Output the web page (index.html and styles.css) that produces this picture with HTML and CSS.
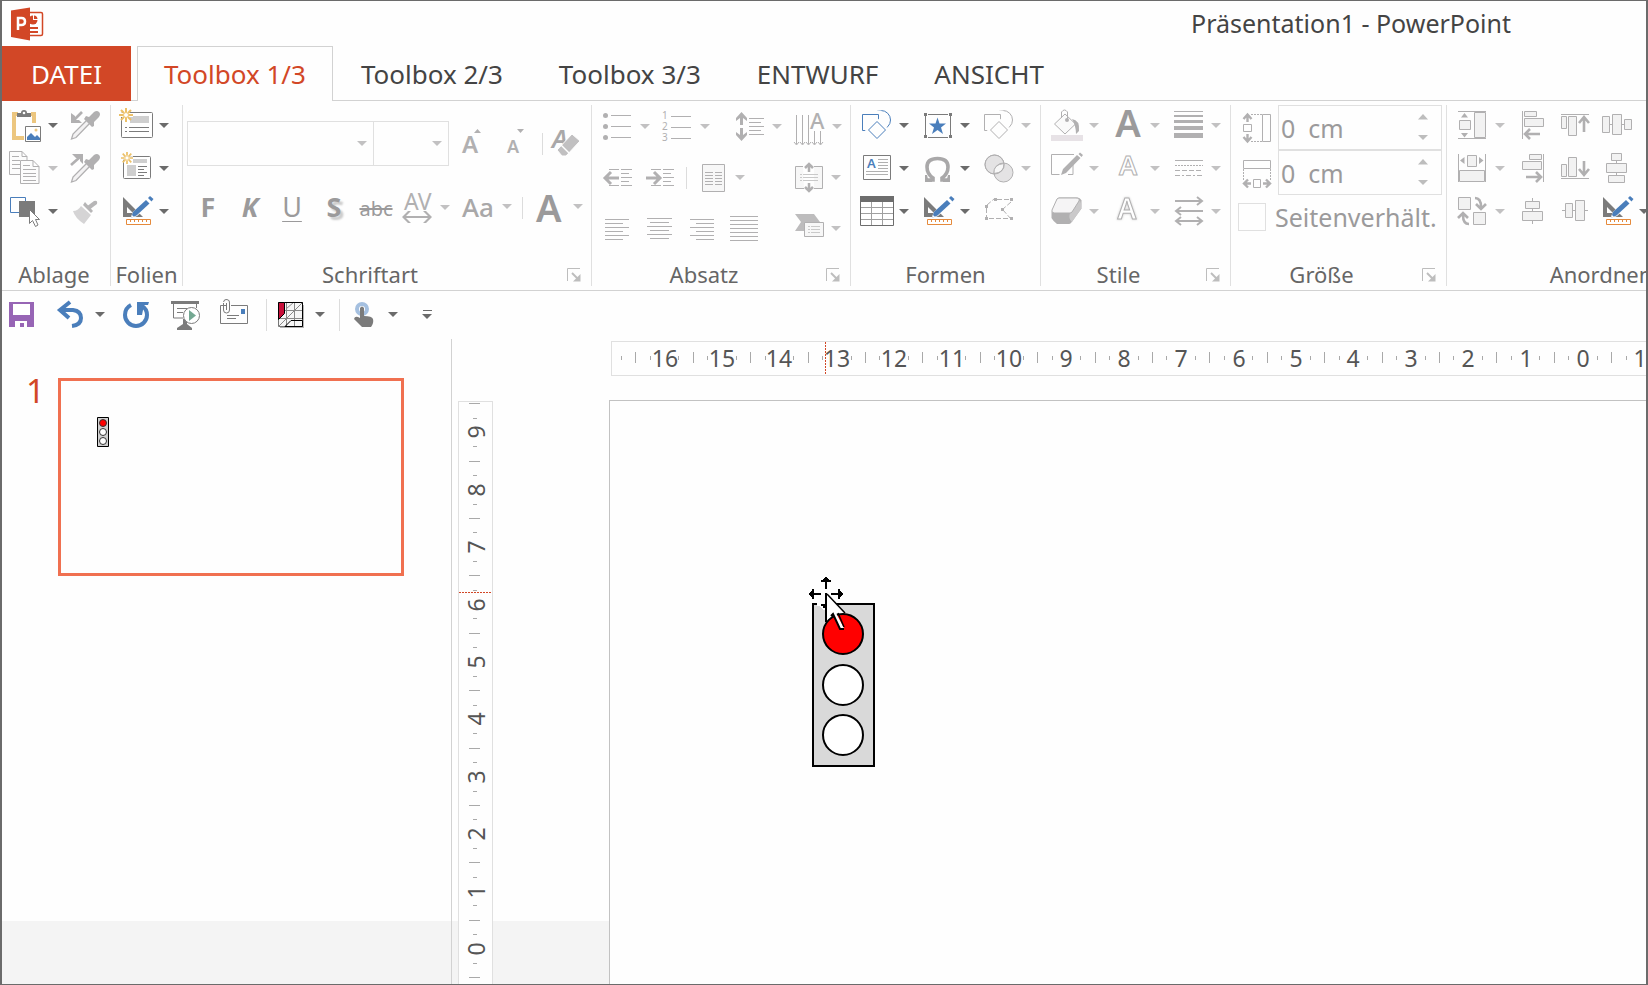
FILE: index.html
```html
<!DOCTYPE html>
<html lang="de">
<head>
<meta charset="utf-8">
<title>Präsentation1 - PowerPoint</title>
<link rel="stylesheet" href="styles.css">
</head>
<body>
<svg class="sprite" aria-hidden="true">
  <symbol id="caret" viewBox="0 0 10 6"><path d="M0 0h10L5 5z" fill="currentColor"/></symbol>
  <symbol id="caret-up" viewBox="0 0 10 6"><path d="M0 5.500h10L5 0z" fill="currentColor"/></symbol>
  <symbol id="launcher" viewBox="0 0 14 14"><path d="M.5 13V.5H13" fill="none" stroke="currentColor"/><path d="M5 5l6 6" stroke="currentColor" stroke-width="2"/><path d="M13.500 6v7.500H6z" fill="currentColor"/></symbol>

  <symbol id="paste" viewBox="0 0 36 36">
    <path d="M10 6H6v24h10M23 6h3v9" fill="none" stroke="#ecc67f" stroke-width="4"/>
    <path d="M9 9V5h4a3 3 0 0 1 6 0h4v4z" fill="#7b7b7b"/><circle cx="16" cy="5" r="1.300" fill="#fff"/>
    <path d="M17.500 18.500h15v15h-15z" fill="#fff" stroke="#7b7b7b"/><path d="M19 32v-3l4-4 4 4 2-2 3 3v2z" fill="#4a7ebb"/><circle cx="28" cy="22" r="1.500" fill="#ecc67f"/>
  </symbol>
  <symbol id="dropper" viewBox="0 0 36 36">
    <path d="M20 12L6 26l-1.500 5L9 29.500 23 15" fill="#f3f2f3" stroke="currentColor" stroke-width="1.300"/>
    <path d="M19 8l3 1 5-5q3-2 5 0t0 5l-5 5v4l-2 1-8-8z" fill="currentColor"/>
  </symbol>
  <symbol id="pick" viewBox="0 0 36 36"><use href="#dropper"/><path d="M15 4L7 12" stroke="currentColor" stroke-width="2.600"/><path d="M4 5v10h11l-3-3H8V8z" fill="currentColor"/></symbol>
  <symbol id="apply" viewBox="0 0 36 36"><use href="#dropper"/><path d="M4 14L13 6" stroke="currentColor" stroke-width="2.600"/><path d="M5 3h11v10l-3-3V7H9z" fill="currentColor"/></symbol>
  <symbol id="copy" viewBox="0 0 36 36" fill="#fcfcfc" stroke="currentColor">
    <path d="M1.500.5H14l5 5v18H1.500zM14 .5v5h5M4 5.500h7M4 9.500h8M4 13.500h8M4 17.500h8"/>
    <path d="M12.500 9.500H25l6 6v17H12.500zM25 9.500v6h6M15 14.500h7M15 18.500h13M15 22.500h13M15 25.500h13M15 29.500h13"/>
  </symbol>
  <symbol id="select" viewBox="0 0 36 36">
    <path d="M2.500 3.500h15v15h-15z" fill="#fff" stroke="#4a7ebb"/><path d="M11 7h16v16H11z" fill="#7b7b7b"/>
    <path d="M21.500 15.500v14l3-3 3 6 2.500-1.500-2.500-5.500h4z" fill="#fff" stroke="#7b7b7b"/>
  </symbol>
  <symbol id="brush" viewBox="0 0 36 36"><path d="M27 7q4-1 3 3l-8 6-3-3z" fill="#b7b6b7"/><path d="M18 8l8 9-2 2-8-8z" fill="#b7b6b7"/><path d="M14 12l10 9-7 9Q8 24 6 17q5 0 8-5z" fill="#d5d4d5"/></symbol>
  <symbol id="spark" viewBox="0 0 14 14"><g stroke="#fff" stroke-width="4"><path d="M7 0v14M0 7h14"/></g><g stroke="#ecc067" stroke-width="2"><path d="M7 0v4M7 10v4M0 7h4M10 7h4M2 2l3 3M9 9l3 3M12 2L9 5M5 9l-3 3"/></g><circle cx="7" cy="7" r="2.500" fill="#fff" stroke="#ecc067"/></symbol>
  <symbol id="newslide" viewBox="0 0 36 36"><rect x="2.500" y="4.500" width="31" height="25" rx="1" fill="#fff" stroke="#7b7b7b"/><path d="M11 8h19v7H11z" fill="#cfcfcf"/><path d="M6 19.500h2M10 19.500h20M6 23.500h2M10 23.500h20" stroke="#7b7b7b"/><use href="#spark" width="14" height="14"/></symbol>
  <symbol id="layout" viewBox="0 0 36 36"><rect x="4.500" y="5.500" width="27" height="22" rx="1" fill="#fff" stroke="#7b7b7b"/><path d="M14 8h14v4H14zM8 14h9v11H8z" fill="#cfcfcf"/><path d="M19 15.500h9M19 18.500h6M19 21.500h9M19 24.500h6" stroke="#7b7b7b"/><use href="#spark" x="2" y="1" width="12" height="12"/></symbol>
  <symbol id="design" viewBox="0 0 36 36">
    <path d="M4 3l20 20H4zM8 13v6h6z" fill="#7b7b7b" fill-rule="evenodd"/>
    <path d="M11 25l3-7 15-14 4 4-15 14z" fill="#fff"/>
    <path d="M12 24l2-6L27 6l3.500 3.500-13 12z" fill="#4a7ebb"/><path d="M29 4l2-2 3.500 3-2 2.500z" fill="#4a7ebb"/><path d="M12 24l1-3 2 2z" fill="#fff"/>
    <path d="M7.500 25.500h24v5h-24z" fill="#fff" stroke="#e58a3c"/><path d="M11.500 26v2M15.500 26v2M19.500 26v2M23.500 26v2M27.500 26v2" stroke="#e58a3c"/>
  </symbol>

  <symbol id="bullets" viewBox="0 0 36 36" fill="currentColor"><circle cx="5.500" cy="6.500" r="2.500"/><circle cx="5.500" cy="17.500" r="2.500"/><circle cx="5.500" cy="28.500" r="2.500"/><path d="M11 6.500h20M11 17.500h20M11 28.500h20" stroke="currentColor"/></symbol>
  <symbol id="linespace" viewBox="0 0 36 36" fill="currentColor"><path d="M9.500 3l5.500 6v3l-4-3v7H8V9l-4 3V9zM9.500 32L15 26v-3l-4 3v-7H8v7l-4-3v3z"/><path d="M17 9.500h15M17 13.500h12M17 17.500h15M17 21.500h12M17 25.500h15" stroke="currentColor"/></symbol>
  <symbol id="outdent" viewBox="0 0 36 36"><path d="M9 9.500h10M21 9.500h11M21 13.500h8M21 17.500h11M21 21.500h8M9 25.500h10M21 25.500h11" stroke="currentColor"/><path d="M11 12L5 18l6 6M5 18h14" fill="none" stroke="currentColor" stroke-width="3"/></symbol>
  <symbol id="indent" viewBox="0 0 36 36"><path d="M9 9.500h10M21 9.500h11M21 13.500h8M21 17.500h11M21 21.500h8M9 25.500h10M21 25.500h11" stroke="currentColor"/><path d="M12 12l6 6-6 6M18 18H4" fill="none" stroke="currentColor" stroke-width="3"/></symbol>
  <symbol id="columns" viewBox="0 0 36 36"><path d="M7.500 4.500h22v27h-22z" fill="#f7f7f7" stroke="currentColor"/><path d="M10 12.500h8M20 12.500h7M10 15.500h8M20 15.500h7M10 18.500h8M20 18.500h7M10 21.500h8M20 21.500h7M10 24.500h8M20 24.500h7" stroke="currentColor"/></symbol>
  <symbol id="valign" viewBox="0 0 36 36"><path d="M12 6.500H4.500v22H13M23 6.500h8.500v22H23" fill="#f7f7f7" stroke="currentColor"/><path d="M9 14.500h2M12 14.500h15M9 17.500h2M12 17.500h15M9 20.500h2M12 20.500h15" stroke="#c9c9c9"/><path d="M14 8l4-4 4 4M18 5v7M14 27l4 4 4-4M18 30v-7" fill="none" stroke="currentColor" stroke-width="2.500"/></symbol>
  <symbol id="smartart" viewBox="0 0 36 36"><path d="M4 3h19l6 8H15l-2 9H4l6-9z" fill="#bdbcbd"/><path d="M13.500 11.500h19v14h-19z" fill="#f7f7f7" stroke="currentColor"/><path d="M17 15.500h2M20 15.500h9M17 18.500h2M20 18.500h9M17 21.500h2M20 21.500h9" stroke="#c9c9c9"/></symbol>
  <symbol id="al-left" viewBox="0 0 36 36"><path d="M5 8.500h24M5 12.500h18M5 16.500h24M5 20.500h18M5 24.500h24M5 28.500h18" stroke="currentColor"/></symbol>
  <symbol id="al-center" viewBox="0 0 36 36"><path d="M5 7.500h25M8 11.500h19M5 15.500h25M8 19.500h19M5 23.500h25M8 27.500h19" stroke="currentColor"/></symbol>
  <symbol id="al-right" viewBox="0 0 36 36"><path d="M6 8.500h24M12 12.500h18M6 16.500h24M12 20.500h18M6 24.500h24M12 28.500h18" stroke="currentColor"/></symbol>
  <symbol id="al-just" viewBox="0 0 36 36"><path d="M4 5.500h28M4 9.500h28M4 13.500h28M4 17.500h28M4 21.500h28M4 25.500h28M4 29.500h28" stroke="currentColor"/></symbol>

  <symbol id="shapes" viewBox="0 0 36 36" stroke="currentColor"><circle class="tint" cx="22" cy="12" r="9.500"/><path d="M2 4h19v18H2z" fill="#fefefe" stroke="#fefefe" stroke-width="3"/><path class="tint" d="M3.500 6.500h16v16h-16z"/><path class="tint" d="M18 12.500l9.500 9.500L18 31.500 8.500 22z" stroke="#fefefe" stroke-width="4"/><path class="tint" d="M18 13.500l8.500 8.500-8.500 8.500L9.500 22z"/></symbol>
  <symbol id="star" viewBox="0 0 36 36"><path d="M5.500 7v21M8 6.500h20M30.500 7v21M8 29.500h20" stroke="#7b7b7b"/><path d="M4 5h3v3H4zM29 5h3v3h-3zM4 27h3v3H4zM29 27h3v3h-3z" fill="#7b7b7b"/><path d="M17.500 9.500l2 6h6.500l-5 4 2 6.500-5.500-4-5.500 4 2-6.500-5-4h6.500z" fill="#4a7ebb"/></symbol>
  <symbol id="omega" viewBox="0 0 36 36"><path d="M5 29h8v-2q-6-4-6-11 0-8.500 10.500-8.500T28 16q0 7-6 11v2h8" fill="none" stroke="#a9a8a9" stroke-width="3.600"/><path d="M5 24h2l1 4h4v3H5zM30 24h-2l-1 4h-4v3h7z" fill="#a9a8a9"/></symbol>
  <symbol id="circles" viewBox="0 0 36 36" fill="#e4e3e4" stroke="currentColor"><circle cx="13.500" cy="13.500" r="9.500"/><circle cx="22.500" cy="21.500" r="9.500"/><path d="M13 22.500q-1-9 10-10 1 9-10 10z" fill="#f7f7f7"/><circle cx="13.500" cy="13.500" r="9.500" fill="none"/></symbol>
  <symbol id="table" viewBox="0 0 36 36"><path d="M1.500 2.500h33v29h-33z" fill="#fff" stroke="#6d6d6d"/><path d="M1 2h34v6H1z" fill="#6d6d6d"/><path d="M12.500 8v23M23.500 8v23M2 13.500h32M2 19.500h32M2 25.500h32" stroke="#a0a0a0"/></symbol>
  <symbol id="poly" viewBox="0 0 36 36" fill="currentColor"><path d="M5.500 14v10M6 11l7-6M16 5.500h14M30 8l-8 7M22 16l8 9M8 24.500h20" stroke="currentColor" stroke-dasharray="5 2" fill="none"/><path d="M4 11h3v3H4zM13 4h3v3h-3zM29 4h3v3h-3zM20 14h3v3h-3zM4 23h3v3H4zM29 23h3v3h-3z"/></symbol>

  <symbol id="bucket" viewBox="0 0 36 36"><path d="M16 6L26.500 16 16 26 5.500 16z" fill="#fafafa" stroke="currentColor"/><path d="M12.500 10V4q3-4 6 0v8" fill="none" stroke="currentColor"/><circle cx="18" cy="12" r="2" fill="currentColor"/><path d="M23 11q8 1 7 12l-3 3q0-8-4-15z" fill="currentColor"/><path d="M2 27h32v6H2z" fill="#e7e2e6"/></symbol>
  <symbol id="outline" viewBox="0 0 36 36"><path d="M25 3.500H2.500v20h8M19 23.500h5V14" fill="none" stroke="currentColor"/><path d="M12 24l2-6L28 4l3.500 3L17 22zM29.500 3l1.500-1.500L34 4l-1.500 2z" fill="currentColor"/></symbol>
  <symbol id="cube" viewBox="0 0 36 36"><path d="M10 3.500h18q3 0 4.500 3v8L22 29q-1 1-2 1H8q-4-3-5.500-6v-6L8 5z" fill="#b1b0b1"/><path d="M31 6q2 4 1 9l-9 13q-4-3-2-9z" fill="#cac9ca"/><path d="M10 4h17q4 0 3 3l-7 11q-1 1-2 1H5q-3-1-2-3L8 5q1-1 2-1z" fill="#f5f4f5" stroke="#b1b0b1"/></symbol>
  <symbol id="weights" viewBox="0 0 36 36" fill="currentColor"><path d="M3 3h29v1H3zM3 7h29v2H3zM3 12h29v3H3zM3 18h29v4H3zM3 25h29v5H3z"/></symbol>
  <symbol id="dashes" viewBox="0 0 36 36" stroke="currentColor"><path d="M4 9.500h28"/><path d="M4 14.500h28" stroke-dasharray="2 1"/><path d="M4 19.500h28" stroke-dasharray="5 2"/><path d="M4 24.500h28" stroke-dasharray="5 2 2 2"/></symbol>
  <symbol id="arrows" viewBox="0 0 36 36" fill="none" stroke="currentColor" stroke-width="2"><path d="M4 7h27M26 3l5 4-5 4M5 17h27M10 13l-5 4 5 4M6 27h24M10 23l-5 4 5 4M26 23l5 4-5 4"/></symbol>

  <symbol id="height" viewBox="0 0 36 36" fill="none" stroke="currentColor"><path d="M24.500 4.500h8v27h-8zM5.500 14.500h8v7h-8z"/><path d="M13 4.500h11M13 31.500h11" stroke-dasharray="2 1"/><path d="M5.500 9l4-4.500 4 4.500M9.500 5v7M5.500 27l4 4.500 4-4.500M9.500 31v-7" stroke-width="2.400"/></symbol>
  <symbol id="width" viewBox="0 0 36 36" fill="none" stroke="currentColor"><path d="M5.500 5.500h27v8h-27zM15.500 24.500h7v8h-7z"/><path d="M5.500 14v12M32.500 14v12" stroke-dasharray="2 1"/><path d="M10 24.500l-4 4 4 4M6 28.500h7M28 24.500l4 4-4 4M32 28.500h-7" stroke-width="2.400"/></symbol>

  <symbol id="alignv" viewBox="0 0 36 36" fill="#f2f2f2" stroke="currentColor"><path d="M3 3.500h28M3 30.500h28M19.500 4.500h11v25h-11zM4.500 12.500h11v9h-11z"/><path d="M6 9.500h7L9.500 5zM6 25h7l-3.500 4.500z" fill="currentColor" stroke="none"/></symbol>
  <symbol id="alignh" viewBox="0 0 36 36" fill="#f2f2f2" stroke="currentColor"><path d="M3.500 3v28M30.500 3v28M4.500 19.500h25v11h-25zM12.500 4.500h9v11h-9z"/><path d="M9.500 6v7L5 9.500zM24 6v7l4.500-3.500z" fill="currentColor" stroke="none"/></symbol>
  <symbol id="swap" viewBox="0 0 36 36" fill="#f2f2f2" stroke="currentColor"><path d="M3.500 3.500h12v12h-12zM18.500 18.500h12v12h-12z"/><path d="M20 4q6 0 6 9M21 10l5 5 5-5M14 30q-6 0-6-9M3 24l5-5 5 5" fill="none" stroke-width="2.600"/></symbol>
  <symbol id="a-left" viewBox="0 0 36 36" fill="#f2f2f2" stroke="currentColor"><path d="M7.500 3v28M9.500 3.500h12v5h-12zM9.500 10.500h19v8h-19z"/><path d="M15 21l-5 5 5 5M10 26h15" fill="none" stroke-width="2.600"/></symbol>
  <symbol id="a-top" viewBox="0 0 36 36" fill="#f2f2f2" stroke="currentColor"><path d="M4 6.500h28M4.500 8.500h5v12h-5zM11.500 8.500h8v19h-8z"/><path d="M22 15l5-6 5 6M27 9v15" fill="none" stroke-width="2.600"/></symbol>
  <symbol id="d-horz" viewBox="0 0 36 36" fill="#f2f2f2" stroke="currentColor"><path d="M3.500 8.500h7v16h-7zM13.500 6.500h9v20h-9zM25.500 11.500h7v10h-7zM11 16.500h2M23 16.500h2"/></symbol>
  <symbol id="a-right" viewBox="0 0 36 36" fill="#f2f2f2" stroke="currentColor"><path d="M28.500 3v28M14.500 3.500h12v5h-12zM7.500 10.500h19v8h-19z"/><path d="M21 21l5 5-5 5M26 26H11" fill="none" stroke-width="2.600"/></symbol>
  <symbol id="a-bottom" viewBox="0 0 36 36" fill="#f2f2f2" stroke="currentColor"><path d="M4 27.500h28M4.500 13.500h5v12h-5zM11.500 6.500h8v19h-8z"/><path d="M22 18l5 6 5-6M27 24V10" fill="none" stroke-width="2.600"/></symbol>
  <symbol id="d-vert" viewBox="0 0 36 36" fill="#f2f2f2" stroke="currentColor"><path d="M12.500 2.500h10v7h-10zM7.500 12.500h20v9h-20zM9.500 24.500h16v7h-16zM17.500 10v2M17.500 22v2"/></symbol>
  <symbol id="c-horz" viewBox="0 0 36 36" fill="#f2f2f2" stroke="currentColor"><path d="M17.500 4v3M17.500 15v2M17.500 27v3M10.500 7.500h14v7h-14zM7.500 17.500h20v9h-20z"/></symbol>
  <symbol id="c-vert" viewBox="0 0 36 36" fill="#f2f2f2" stroke="currentColor"><path d="M5 16.500h3M15 16.500h3M27 16.500h4M8.500 9.500h7v14h-7zM18.500 6.500h9v20h-9z"/></symbol>

  <symbol id="save" viewBox="0 0 36 36"><path d="M5 5h25v25H5z" fill="#9765b5"/><path d="M9 7h17v11H9zM11 24h12v6h-3v-4h-4v4h-5z" fill="#fff"/></symbol>
  <symbol id="undo" viewBox="0 0 36 36" fill="none" stroke="#4a7ebb"><path d="M8 13h12q8 1 8 8 0 7-9 8" stroke-width="4"/><path d="M17 5L7 13l9 8" stroke-width="4"/></symbol>
  <symbol id="redo" viewBox="0 0 36 36"><path d="M13 8q-6 3-6 10a11 11 0 0 0 22 0q0-6-5-9" fill="none" stroke="#4a7ebb" stroke-width="4"/><path d="M19 5h12l-1 3h-4l-2 10h-5z" fill="#4a7ebb"/></symbol>
  <symbol id="show" viewBox="0 0 36 36"><path d="M4 4h28v3H4z" fill="#7b7b7b"/><path d="M6.500 7v14H16M29.500 7v4M10 11.500h10M10 15.500h6" fill="none" stroke="#7b7b7b"/><path d="M16 22h4v5l5 4v2H10v-2l6-4z" fill="#7b7b7b"/><circle cx="24.500" cy="18.500" r="8" fill="#fff" stroke="#7b7b7b"/><path d="M22 13v11l7-5.500z" fill="#74a892"/></symbol>
  <symbol id="mail" viewBox="0 0 36 36"><path d="M10 8.500H4.500v18h27v-18H15M11 18.500h12M11 21.500h9" fill="none" stroke="#7b7b7b"/><path d="M25 12h4v5h-4z" fill="#4a7ebb"/><path d="M7.500 6v7a3 3 0 0 0 6 0V6a3 3 0 0 0-6-1M10.500 6v7" fill="none" stroke="#7b7b7b"/></symbol>
  <symbol id="gridtable" viewBox="0 0 36 36"><path d="M7 8h24v23H7z" fill="#b5b5b5"/><path d="M5.500 5.500h24v24h-24z" fill="#f6f6f6" stroke="#777"/><path d="M13.500 5v24M21.500 5v24M6 13.500h23M6 21.500h23M6 29L29 6M13 12l8-7" fill="none" stroke="#888"/><path d="M5.500 5.500h6v11l-6 6z" fill="#c8103a" stroke="#000"/><path d="M18 23.500h11.500v6H12zM12 5.500h17.500v17" fill="none" stroke="#000"/></symbol>
  <symbol id="touch" viewBox="0 0 36 36"><circle cx="16" cy="12" r="5" fill="none" stroke="#a5c0e0" stroke-width="4"/><path d="M14 11q2-3 4 0v8q8 0 9 3 1 4-2 8h-9L8 22q1-4 6-1z" fill="#7b7b7b"/></symbol>
  <symbol id="traffic" viewBox="0 0 63 164"><path d="M1 1h61v162H1z" fill="#d9d9d9" stroke="#000" stroke-width="2"/><g stroke="#000" stroke-width="2"><circle cx="31" cy="31" r="20" fill="red"/><circle cx="31" cy="82" r="20" fill="#fff"/><circle cx="31" cy="132" r="20" fill="#fff"/></g></symbol>
  <symbol id="traffic-mini" viewBox="0 0 12 30"><path d="M.5.500h11v29H.5z" fill="#d0d0d0" stroke="#000"/><g stroke="#333"><circle cx="6" cy="6" r="3.500" fill="red"/><circle cx="6" cy="15" r="3.500" fill="#fff"/><circle cx="6" cy="24" r="3.500" fill="#fff"/></g></symbol>
</svg>

<div class="window">
  <header class="titlebar">
    <svg class="logo" viewBox="0 0 34 34" aria-hidden="true"><path d="M18 5.500h13q1.500 0 1.500 1.500v20q0 1.500-1.500 1.500H18z" fill="#fff" stroke="#d24726" stroke-width="1.500"/><circle cx="23" cy="13" r="4.500" fill="#d24726"/><path d="M23 13V7.500a5 5 0 0 1 5.500 5.500z" fill="#fff"/><path d="M24 12V8.500a4 4 0 0 1 3.500 3.500z" fill="#d24726"/><path d="M20 20h8v2h-8zM20 24h8v2h-8z" fill="#d24726"/><path d="M1 3.500L20 .5v33L1 30z" fill="#d24726"/><path d="M8 23V11h3.500q3.500 0 3.500 3.500t-3.500 3.500H9" fill="none" stroke="#fff" stroke-width="2.500"/></svg>
    <h1>Präsentation1 - PowerPoint</h1>
  </header>

  <nav class="tabs">
    <button class="file">DATEI</button>
    <button class="active">Toolbox 1/3</button>
    <button>Toolbox 2/3</button>
    <button>Toolbox 3/3</button>
    <button>ENTWURF</button>
    <button>ANSICHT</button>
  </nav>

  <main class="ribbon">
    <section class="group clipboard">
      <div class="rows">
        <div class="row"><button aria-label="Einfügen"><svg><use href="#paste"/></svg><svg class="caret"><use href="#caret"/></svg></button><button class="dim" aria-label="Format aufnehmen"><svg><use href="#pick"/></svg></button></div>
        <div class="row"><button class="dim" aria-label="Kopieren"><svg><use href="#copy"/></svg><svg class="caret"><use href="#caret"/></svg></button><button class="dim" aria-label="Format anwenden"><svg><use href="#apply"/></svg></button></div>
        <div class="row"><button aria-label="Markieren"><svg><use href="#select"/></svg><svg class="caret"><use href="#caret"/></svg></button><button class="dim" aria-label="Format übertragen"><svg><use href="#brush"/></svg></button></div>
      </div>
      <footer><h2>Ablage</h2></footer>
    </section>

    <section class="group slides">
      <div class="rows">
        <div class="row"><button aria-label="Neue Folie"><svg><use href="#newslide"/></svg><svg class="caret"><use href="#caret"/></svg></button></div>
        <div class="row"><button aria-label="Layout"><svg><use href="#layout"/></svg><svg class="caret"><use href="#caret"/></svg></button></div>
        <div class="row"><button aria-label="Entwurf"><svg><use href="#design"/></svg><svg class="caret"><use href="#caret"/></svg></button></div>
      </div>
      <footer><h2>Folien</h2></footer>
    </section>

    <section class="group font">
      <div class="rows">
        <div class="row">
          <div class="combos">
            <label class="combo family"><select aria-label="Schriftart"><option></option></select><svg class="caret"><use href="#caret"/></svg></label>
            <label class="combo size"><select aria-label="Schriftgrad"><option></option></select><svg class="caret"><use href="#caret"/></svg></label>
          </div>
          <button class="dim" aria-label="Schrift vergrößern"><svg viewBox="0 0 36 36" fill="currentColor"><text x="6" y="27" font-size="24" font-weight="600">A</text><path d="M18 7h7l-3.500-4z"/></svg></button>
          <button class="dim" aria-label="Schrift verkleinern"><svg viewBox="0 0 36 36" fill="currentColor"><text x="8" y="27" font-size="18" font-weight="600">A</text><path d="M18 3h7l-3.500 4z"/></svg></button>
          <i class="sep"></i>
          <button class="dim" aria-label="Formatierung löschen"><svg viewBox="0 0 36 36"><text x="2" y="22" font-size="26" font-style="italic" font-weight="600" fill="#a9a8a9">A</text><path d="M7 24L22 8l8 7-14 15h-4z" fill="#c1c0c1" stroke="#fff"/><path d="M11 19l8 8" stroke="#fff" stroke-width="1.500"/></svg></button>
        </div>
        <div class="row">
          <button class="letter bold">F</button>
          <button class="letter bold italic">K</button>
          <button class="letter underline">U</button>
          <button class="letter bold shadow">S</button>
          <button class="letter strike">abc</button>
          <button class="dim" aria-label="Zeichenabstand"><svg viewBox="0 0 36 36" fill="currentColor"><text x="4" y="20" font-size="23">AV</text><path d="M5 27h24" stroke="currentColor" stroke-width="2"/><path d="M11 21l-6 6 6 6H8l-6-6 6-6zM23 21l6 6-6 6h3l6-6-6-6z"/></svg><svg class="caret"><use href="#caret"/></svg></button>
          <button class="dim letter"><span>Aa</span><svg class="caret"><use href="#caret"/></svg></button>
          <i class="sep"></i>
          <button class="dim letter big"><span>A</span><svg class="caret"><use href="#caret"/></svg></button>
        </div>
      </div>
      <footer><h2>Schriftart</h2><button class="launch" aria-label="Schriftart öffnen"><svg><use href="#launcher"/></svg></button></footer>
    </section>

    <section class="group paragraph">
      <div class="rows">
        <div class="row"><button class="dim" aria-label="Aufzählung"><svg><use href="#bullets"/></svg><svg class="caret"><use href="#caret"/></svg></button><button class="dim" aria-label="Nummerierung"><svg viewBox="0 0 36 36" fill="currentColor"><g font-size="10"><text x="2" y="10">1</text><text x="2" y="21">2</text><text x="2" y="32">3</text></g><path d="M11 7.500h20M11 18.500h20M11 29.500h20" stroke="currentColor"/></svg><svg class="caret"><use href="#caret"/></svg></button><i class="sep"></i><button class="dim" aria-label="Zeilenabstand"><svg><use href="#linespace"/></svg><svg class="caret"><use href="#caret"/></svg></button><button class="dim end" aria-label="Textrichtung"><svg viewBox="0 0 36 36" fill="none" stroke="currentColor"><path d="M4.500 6v29M10.500 6v29M16.500 6v29M22.500 22v13M28.500 22v13M2 33l2.500 3L7 33M8 33l2.500 3 2.500-3M14 33l2.500 3 2.500-3M20 33l2.500 3 2.500-3M26 33l2.500 3 2.500-3"/><text x="18" y="20" font-size="22" font-weight="500" fill="currentColor" stroke="none">A</text></svg><svg class="caret"><use href="#caret"/></svg></button></div>
        <div class="row tight"><button class="dim" aria-label="Einzug verkleinern"><svg><use href="#outdent"/></svg></button><button class="dim" aria-label="Einzug vergrößern"><svg><use href="#indent"/></svg></button><i class="sep"></i><button class="dim" aria-label="Spalten"><svg><use href="#columns"/></svg><svg class="caret"><use href="#caret"/></svg></button><button class="dim end" aria-label="Text ausrichten"><svg><use href="#valign"/></svg><svg class="caret"><use href="#caret"/></svg></button></div>
        <div class="row tight"><button class="dim" aria-label="Linksbündig"><svg><use href="#al-left"/></svg></button><button class="dim" aria-label="Zentriert"><svg><use href="#al-center"/></svg></button><button class="dim" aria-label="Rechtsbündig"><svg><use href="#al-right"/></svg></button><button class="dim" aria-label="Blocksatz"><svg><use href="#al-just"/></svg></button><button class="dim end" aria-label="SmartArt"><svg><use href="#smartart"/></svg><svg class="caret"><use href="#caret"/></svg></button></div>
      </div>
      <footer><h2>Absatz</h2><button class="launch" aria-label="Absatz öffnen"><svg><use href="#launcher"/></svg></button></footer>
    </section>

    <section class="group shapes">
      <div class="rows">
        <div class="row"><button class="blue" aria-label="Formen"><svg><use href="#shapes"/></svg><svg class="caret"><use href="#caret"/></svg></button><button aria-label="Auswahl"><svg><use href="#star"/></svg><svg class="caret"><use href="#caret"/></svg></button><button class="dim" aria-label="Form ändern"><svg><use href="#shapes"/></svg><svg class="caret"><use href="#caret"/></svg></button></div>
        <div class="row"><button aria-label="Textfeld"><svg viewBox="0 0 36 36"><path d="M4.500 4.500h27v24h-27z" fill="none" stroke="#7b7b7b"/><text x="8" y="17" font-size="13" font-weight="600" fill="#4a7ebb">A</text><path d="M19 8.500h10M19 11.500h10M19 14.500h10M19 17.500h10M7 20.500h22M7 23.500h22" stroke="#b0b0b0"/></svg><svg class="caret"><use href="#caret"/></svg></button><button aria-label="Symbol"><svg><use href="#omega"/></svg><svg class="caret"><use href="#caret"/></svg></button><button class="dim" aria-label="Formen zusammenführen"><svg><use href="#circles"/></svg><svg class="caret"><use href="#caret"/></svg></button></div>
        <div class="row"><button aria-label="Tabelle"><svg><use href="#table"/></svg><svg class="caret"><use href="#caret"/></svg></button><button aria-label="Werkzeuge"><svg><use href="#design"/></svg><svg class="caret"><use href="#caret"/></svg></button><button class="dim" aria-label="Punkte bearbeiten"><svg><use href="#poly"/></svg></button></div>
      </div>
      <footer><h2>Formen</h2></footer>
    </section>

    <section class="group styles">
      <div class="rows">
        <div class="row"><button class="dim" aria-label="Fülleffekt"><svg><use href="#bucket"/></svg><svg class="caret"><use href="#caret"/></svg></button><button class="dim" aria-label="Textfüllung"><svg viewBox="0 0 36 36"><text x="18" y="29" font-size="38" font-weight="600" text-anchor="middle" fill="#9b9a9b">A</text></svg><svg class="caret"><use href="#caret"/></svg></button><button class="dim" aria-label="Linienstärke"><svg><use href="#weights"/></svg><svg class="caret"><use href="#caret"/></svg></button></div>
        <div class="row"><button class="dim" aria-label="Formkontur"><svg><use href="#outline"/></svg><svg class="caret"><use href="#caret"/></svg></button><button class="dim" aria-label="Textkontur"><svg viewBox="0 0 36 36"><text x="18" y="24" font-size="27" font-weight="600" text-anchor="middle" fill="#fff" stroke="#b1b0b1">A</text></svg><svg class="caret"><use href="#caret"/></svg></button><button class="dim" aria-label="Strichart"><svg><use href="#dashes"/></svg><svg class="caret"><use href="#caret"/></svg></button></div>
        <div class="row"><button class="dim" aria-label="Formeffekte"><svg><use href="#cube"/></svg><svg class="caret"><use href="#caret"/></svg></button><button class="dim" aria-label="Texteffekte"><svg class="glow" viewBox="0 0 36 36"><text x="17" y="25" font-size="28" font-weight="600" text-anchor="middle" fill="#fff" stroke="#b1b0b1">A</text></svg><svg class="caret"><use href="#caret"/></svg></button><button class="dim" aria-label="Pfeile"><svg><use href="#arrows"/></svg><svg class="caret"><use href="#caret"/></svg></button></div>
      </div>
      <footer><h2>Stile</h2><button class="launch" aria-label="Stile öffnen"><svg><use href="#launcher"/></svg></button></footer>
    </section>

    <section class="group dimension">
      <div class="fields">
        <div class="field"><svg class="dim"><use href="#height"/></svg><div class="spin"><input aria-label="Höhe" value="0  cm"><div><button aria-label="Höher"><svg class="caret"><use href="#caret-up"/></svg></button><button aria-label="Niedriger"><svg class="caret"><use href="#caret"/></svg></button></div></div></div>
        <div class="field"><svg class="dim"><use href="#width"/></svg><div class="spin"><input aria-label="Breite" value="0  cm"><div><button aria-label="Breiter"><svg class="caret"><use href="#caret-up"/></svg></button><button aria-label="Schmaler"><svg class="caret"><use href="#caret"/></svg></button></div></div></div>
        <label class="check"><input type="checkbox">Seitenverhält.</label>
      </div>
      <footer><h2>Größe</h2><button class="launch" aria-label="Größe öffnen"><svg><use href="#launcher"/></svg></button></footer>
    </section>

    <section class="group arrange">
      <div class="rows">
        <div class="row tight"><button class="dim first" aria-label="Höhe angleichen"><svg><use href="#alignv"/></svg><svg class="caret"><use href="#caret"/></svg></button><button class="dim" aria-label="Links ausrichten"><svg><use href="#a-left"/></svg></button><button class="dim" aria-label="Oben ausrichten"><svg><use href="#a-top"/></svg></button><button class="dim" aria-label="Horizontal verteilen"><svg><use href="#d-horz"/></svg></button></div>
        <div class="row tight"><button class="dim first" aria-label="Breite angleichen"><svg><use href="#alignh"/></svg><svg class="caret"><use href="#caret"/></svg></button><button class="dim" aria-label="Rechts ausrichten"><svg><use href="#a-right"/></svg></button><button class="dim" aria-label="Unten ausrichten"><svg><use href="#a-bottom"/></svg></button><button class="dim" aria-label="Vertikal verteilen"><svg><use href="#d-vert"/></svg></button></div>
        <div class="row tight"><button class="dim first" aria-label="Tauschen"><svg><use href="#swap"/></svg><svg class="caret"><use href="#caret"/></svg></button><button class="dim" aria-label="Horizontal zentrieren"><svg><use href="#c-horz"/></svg></button><button class="dim" aria-label="Vertikal zentrieren"><svg><use href="#c-vert"/></svg></button><button aria-label="Anordnen"><svg><use href="#design"/></svg><svg class="caret"><use href="#caret"/></svg></button></div>
      </div>
      <footer><h2>Anordnen</h2></footer>
    </section>
  </main>

  <div class="quick">
    <button aria-label="Speichern"><svg><use href="#save"/></svg></button>
    <button aria-label="Rückgängig"><svg><use href="#undo"/></svg><svg class="caret"><use href="#caret"/></svg></button>
    <button aria-label="Wiederholen"><svg><use href="#redo"/></svg></button>
    <button aria-label="Bildschirmpräsentation"><svg><use href="#show"/></svg></button>
    <button aria-label="Als Anlage senden"><svg><use href="#mail"/></svg></button>
    <i class="sep"></i>
    <button aria-label="Raster"><svg><use href="#gridtable"/></svg><svg class="caret"><use href="#caret"/></svg></button>
    <i class="sep"></i>
    <button aria-label="Fingereingabe"><svg><use href="#touch"/></svg><svg class="caret"><use href="#caret"/></svg></button>
    <button class="more" aria-label="Schnellzugriff anpassen"><svg class="caret"><use href="#caret"/></svg></button>
  </div>

  <div class="workspace">
    <aside class="thumbs">
      <span class="number">1</span>
      <button class="thumb" aria-label="Folie 1"><svg class="light"><use href="#traffic-mini"/></svg></button>
    </aside>
    <div class="editor">
      <div class="ruler horizontal"><svg id="ruler-h"></svg></div>
      <div class="ruler vertical"><svg id="ruler-v"></svg></div>
      <div class="slide">
        <svg class="light"><use href="#traffic"/></svg>
        <svg class="cursor" viewBox="0 0 40 56" aria-hidden="true">
          <g shape-rendering="crispEdges">
            <path d="M17 1h2v1h1v1h1v1h2v2h-4v7h-2V6h-4V4h2V3h1V2h1z"/>
            <path d="M1 17h1v-1h1v-1h1v-2h2v4h7v2H6v4H4v-2H3v-1H2v-1H1zM35 17h-1v-1h-1v-1h-1v-2h-2v4h-7v2h7v4h2v-2h1v-1h1v-1h1z"/>
            <path d="M9 26h8v8h-2l-4-4H9z" fill="#fff"/><path d="M13 28h4v4h-2v-2h-2z"/>
          </g>
          <path d="M19 18l18 19h-9l8 15-4 2-7-15-6 5z" fill="#fff"/>
          <path d="M17 17h2v29h-2z"/>
          <path d="M19 18l18 19" stroke="#000" stroke-width="1.500" fill="none"/>
          <path d="M23 40l2-2 7 15h4" stroke="#000" stroke-width="2" fill="none"/>
          <path d="M30 37l6 14" stroke="#000" stroke-width="1.500" fill="none"/>
        </svg>
      </div>
    </div>
  </div>
</div>
<script src="rulers.js"></script>
</body>
</html>
```

FILE: styles.css
```css
* { box-sizing: border-box; }
body {
  margin: 0;
  font-family: "Noto Sans", "Open Sans", sans-serif;
  color: #444;
  background: #fefefe;
}
h1, h2 { margin: 0; font-weight: 400; }
button {
  margin: 0;
  padding: 0;
  border: 0;
  background: none;
  font: inherit;
  color: #6b6b6b;
}
svg { display: block; flex: none; }
.sprite { position: absolute; width: 0; height: 0; }

.window {
  display: flex;
  flex-direction: column;
  height: 100vh;
  border: solid #6b6b6b;
  border-width: 1px 2px;
  overflow: hidden;
}

.titlebar {
  display: flex;
  align-items: center;
  justify-content: space-between;
  height: 45px;
  flex: none;
  padding: 0 135px 0 8px;
}
.titlebar .logo { width: 34px; height: 34px; }
.titlebar h1 { font-size: 25px; line-height: 45px; }

.tabs {
  display: flex;
  flex: none;
  height: 55px;
  font-size: 26px;
  box-shadow: inset 0 -1px #d2d2d2;
}
.tabs button { padding: 0 28px; color: #444; }
.tabs .file { background: #d24726; color: #fff; margin-right: 6px; padding: 0 29px; }
.tabs .active {
  padding: 0 26px;
  color: #d24726;
  background: #fefefe;
  border: 1px solid #d2d2d2;
  border-bottom: 0;
}

.ribbon {
  display: flex;
  flex: none;
  height: 190px;
  padding: 4px 0;
  border-bottom: 1px solid #d2d2d2;
  overflow: hidden;
}
.group {
  display: flex;
  flex-direction: column;
  justify-content: space-between;
  flex: none;
  border-right: 1px solid #e0e0e0;
}
.group footer { display: flex; height: 23px; align-items: center; gap: 10px; padding-right: 10px; }
.group h2 { flex: 1; text-align: center; font-size: 22px; line-height: 23px; color: #666; white-space: nowrap; }
.launch { color: #bdbdbd; }
.launch svg { width: 14px; height: 14px; }

.rows { display: flex; flex-direction: column; gap: 7px; padding: 3px 0 0 8px; }
.row { display: flex; align-items: center; gap: 11px; }
.row.tight { gap: 6px; }
.row button, .quick button { display: flex; align-items: center; gap: 4px; }
.row svg, .quick svg, .field svg { width: 36px; height: 36px; overflow: visible; }
.row .caret, .quick .caret, .spin .caret, .combo .caret { width: 10px; height: 6px; }
.dim { color: #b1b0b1; }
.dim .caret { color: #c2c1c2; }
.blue { color: #4a7ebb; }
.blue .caret { color: #6b6b6b; }
.tint { fill: #fefefe; }
.glow { filter: drop-shadow(0 0 1px #ccc); }
.sep { width: 1px; height: 22px; background: #dcdcdc; }

.clipboard { width: 109px; }
.clipboard .rows { padding-left: 6px; }
.clipboard .row { gap: 9px; }
.slides footer, .shapes footer, .arrange footer { padding: 0; }
.clipboard footer { padding-right: 4px; }
.slides { width: 72px; }

.font { width: 409px; }
.font .rows { padding: 16px 0 0 4px; gap: 24px; }
.combos { display: flex; }
.combo { display: flex; align-items: center; height: 45px; border: 1px solid #e0e0e0; padding-right: 6px; color: #c2c1c2; }
.combo select { flex: 1; min-width: 0; height: 100%; appearance: none; border: 0; background: none; font: inherit; }
.family { width: 187px; }
.size { width: 75px; border-left: 0; }
.font .row:first-child { gap: 7px; }
.font .row:last-child { gap: 6px; padding-left: 3px; }
.font .row:last-child .sep { margin: 0 4px; }
.row .letter { justify-content: center; width: 36px; height: 36px; padding-bottom: 3px; font-size: 27px; color: #9b9a9b; }
.row .dim.letter { width: auto; gap: 8px; padding-left: 6px; font-size: 26px; font-weight: 500; color: #a9a8a9; }
.row .dim.letter.big { gap: 12px; padding-left: 3px; font-size: 38px; font-weight: 600; color: #9b9a9b; }
.letter.bold { font-weight: 700; }
.letter.italic { font-style: italic; }
.letter.underline { text-decoration: underline; text-decoration-thickness: 1px; text-underline-offset: 4px; }
.letter.shadow { text-shadow: 3px 3px 2px #ccc; }
.row .letter.strike { padding: 0; font-size: 20px; text-decoration: line-through; }

.paragraph { width: 259px; }
.paragraph .rows { padding-top: 4px; gap: 15px; }
.paragraph .row { gap: 10px; }
.paragraph .row.tight { gap: 6px; }
.paragraph .sep { margin: 0 1px; }
.paragraph .tight .sep { margin: 0 2px; }
.row .end { margin-left: auto; margin-right: 9px; }

.shapes, .styles { width: 190px; }

.dimension { width: 216px; }
.fields { padding: 0 4px 0 7px; }
.field { display: flex; align-items: center; justify-content: space-between; height: 45px; }
.spin { display: flex; width: 164px; height: 45px; border: 1px solid #e0e0e0; padding-right: 13px; }
.spin input { flex: 1; min-width: 0; border: 0; padding: 0 0 0 2px; background: none; font: inherit; font-size: 25px; color: #9b9a9b; }
.spin div { display: flex; flex-direction: column; justify-content: center; gap: 15px; }
.spin button { color: #bdbdbd; }
.check { display: flex; align-items: center; gap: 9px; height: 44px; font-size: 25px; color: #9b9a9b; white-space: nowrap; }
.check input { appearance: none; width: 28px; height: 28px; margin: 0; border: 1px solid #e0e0e0; }

.arrange { width: 308px; border: 0; }
.row .first { margin-right: 4px; }

.quick { display: flex; flex: none; align-items: center; gap: 13px; height: 48px; padding-left: 2px; }
.quick button { gap: 6px; }
.quick .sep { height: 32px; margin: 0 1px; }
.quick .sep + button { margin-left: -8px; }
.quick .more { flex-direction: column; gap: 3px; margin-left: 11px; }
.quick .more::before { content: ""; width: 9px; height: 1px; background: #6b6b6b; }

.workspace {
  display: flex;
  flex: 1;
  min-height: 0;
  background: linear-gradient(to top, #f4f4f4 63px, #fefefe 63px);
}
.thumbs {
  display: flex;
  align-items: flex-start;
  justify-content: space-between;
  width: 450px;
  flex: none;
  padding: 39px 47px 0 24px;
  border-right: 1px solid #d2d2d2;
}
.number { font-size: 33px; line-height: 26px; color: #d24726; }
.thumb { position: relative; width: 346px; height: 198px; border: 3px solid #f07050; background: #fefefe; }
.thumb .light { position: absolute; left: 36px; top: 36px; width: 12px; height: 30px; }

.editor {
  display: grid;
  flex: 1;
  min-width: 0;
  grid-template: 35px 1fr / 35px 1fr;
  gap: 24px 116px;
  padding: 2px 0 0 6px;
}
.ruler { background: #fefefe; border: 1px solid #e0e0e0; overflow: hidden; }
.ruler svg { width: 100%; height: 100%; }
.ruler text { font-size: 23px; fill: #555; text-anchor: middle; }
.ruler line { stroke: #a9a9a9; }
.ruler .marker { stroke: #d24726; stroke-dasharray: 2 1; }
.horizontal { grid-column: 2; margin-left: 2px; border-right: 0; }
.vertical { margin-top: 1px; border-bottom: 0; }
.slide { position: relative; border: solid #c2c2c2; border-width: 1px 0 0 1px; background: #fefefe; overflow: hidden; }
.slide .light { position: absolute; left: 202px; top: 202px; width: 63px; height: 164px; }
.cursor { position: absolute; left: 198px; top: 175px; width: 40px; height: 56px; }
```

FILE: rulers.js
```js
const NS = "http://www.w3.org/2000/svg";
const CM = 57.4;

function add(svg, name, attrs, text) {
  const el = document.createElementNS(NS, name);
  for (const key in attrs) el.setAttribute(key, attrs[key]);
  if (text !== undefined) el.textContent = text;
  svg.appendChild(el);
}

// Draws one number per centimetre, a long tick at each half and short ticks at the quarters.
function draw(svg, zero, from, to, vertical, marker) {
  for (let q = from * 4; q <= to * 4; q++) {
    const pos = zero + (q * CM) / 4;
    const mid = Math.floor(pos) + 0.5;
    if (q % 4 === 0) {
      const label = Math.abs(q / 4);
      if (vertical) add(svg, "text", { transform: `translate(26 ${Math.round(pos)}) rotate(-90)` }, label);
      else add(svg, "text", { x: Math.round(pos), y: 25 }, label);
    } else {
      const a = q % 2 ? 14 : 10, b = q % 2 ? 18 : 21;
      add(svg, "line", vertical ? { x1: a, x2: b, y1: mid, y2: mid } : { x1: mid, x2: mid, y1: a, y2: b });
    }
  }
  add(svg, "line", vertical
    ? { class: "marker", x1: 0, x2: 34, y1: marker, y2: marker }
    : { class: "marker", x1: marker, x2: marker, y1: 0, y2: 34 });
}

const across = document.getElementById("ruler-h");
const down = document.getElementById("ruler-v");
draw(across, 971, -16.75, Math.ceil((across.clientWidth - 971) / CM), false, 213.5);
draw(down, 547, -9.5, Math.floor((down.clientHeight - 547) / CM * 2) / 2, true, 190.5);
```
